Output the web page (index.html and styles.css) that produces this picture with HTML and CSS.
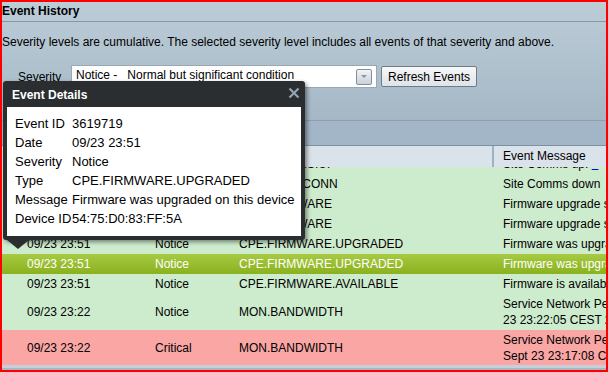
FILE: index.html
```html
<!DOCTYPE html>
<html lang="en">

<head>
    <meta charset="UTF-8">
    <title>Event History</title>
    <link rel="stylesheet" href="styles.css">
</head>

<body>
    <div class="frame">
        <div class="title">Event History</div>
        <div class="intro">Severity levels are cumulative. The selected severity level includes all events of that severity and above.</div>
        <div class="controls">
            <span class="label">Severity</span>
            <div class="select">
                <span class="select-text">Notice -   Normal but significant condition</span>
                <span class="select-btn"><i></i></span>
            </div>
            <button class="refresh">Refresh Events</button>
        </div>
        <div class="band"></div>

        <!-- event table -->
        <div class="table">
            <div class="thead">
                <span>Date</span>
                <span>Severity</span>
                <span class="th-type">Type</span>
                <span class="th-msg">Event Message</span>
            </div>
            <div class="tbody">
                <div class="row cut">
                    <span>09/23 23:52</span><span>Notice</span><span>SITE.COMMS.UP</span><span class="msg">Site Comms up: <a>&nbsp;&nbsp;</a></span>
                </div>
                <div class="row">
                    <span>09/23 23:52</span><span>Notice</span><span>SITE.LOST.CONN</span><span class="msg">Site Comms down</span>
                </div>
                <div class="row">
                    <span>09/23 23:51</span><span>Notice</span><span>CPE.FIRMWARE</span><span class="msg">Firmware upgrade started</span>
                </div>
                <div class="row">
                    <span>09/23 23:51</span><span>Notice</span><span>CPE.FIRMWARE</span><span class="msg">Firmware upgrade started</span>
                </div>
                <div class="row">
                    <span>09/23 23:51</span><span>Notice</span><span>CPE.FIRMWARE.UPGRADED</span><span class="msg">Firmware was upgraded on this device</span>
                </div>
                <div class="row active">
                    <span>09/23 23:51</span><span>Notice</span><span>CPE.FIRMWARE.UPGRADED</span><span class="msg">Firmware was upgraded on this device</span>
                </div>
                <div class="row">
                    <span>09/23 23:51</span><span>Notice</span><span>CPE.FIRMWARE.AVAILABLE</span><span class="msg">Firmware is available for this device</span>
                </div>
                <div class="row tall">
                    <span>09/23 23:22</span><span>Notice</span><span>MON.BANDWIDTH</span><span class="msg">Service Network Performance restored on Sept<br>23 23:22:05 CEST 2013</span>
                </div>
                <div class="row tall critical">
                    <span>09/23 23:22</span><span>Critical</span><span>MON.BANDWIDTH</span><span class="msg">Service Network Performance degraded on<br>Sept 23 23:17:08 CEST 2013</span>
                </div>
            </div>
        </div>

        <!-- popup -->
        <div class="popup">
            <div class="popup-head">
                <span>Event Details</span>
                <svg class="close" viewBox="0 0 12 12" width="12" height="12"><path d="M1.5 1.5 10.5 10.5M10.5 1.5 1.5 10.5" stroke="#93a3b2" stroke-width="2.2" fill="none"/></svg>
            </div>
            <div class="popup-body">
                <div class="field"><span>Event ID</span><span>3619719</span></div>
                <div class="field"><span>Date</span><span>09/23 23:51</span></div>
                <div class="field"><span>Severity</span><span>Notice</span></div>
                <div class="field"><span>Type</span><span>CPE.FIRMWARE.UPGRADED</span></div>
                <div class="field"><span>Message</span><span>Firmware was upgraded on this device</span></div>
                <div class="field"><span>Device ID</span><span>54:75:D0:83:FF:5A</span></div>
            </div>
        </div>
    </div>
</body>

</html>
```

FILE: styles.css
```css
* {
    margin: 0;
    padding: 0;
    box-sizing: border-box;
}

body {
    font-family: "Liberation Sans", Arial, sans-serif;
    font-size: 12px;
    color: #000;
}

.frame {
    position: relative;
    width: 608px;
    height: 372px;
    border: 2px solid #f00;
    background: linear-gradient(to bottom, #bccdd8, #a5b7c5 120px);
    overflow: hidden;
}

.title {
    height: 20px;
    line-height: 19px;
    font-weight: bold;
    border-bottom: 1px solid #8797a5;
}

.intro {
    margin-top: 10px;
    height: 20px;
    line-height: 20px;
}

.controls {
    display: flex;
    align-items: center;
    margin-top: 13px;
    height: 23px;
}

.label {
    width: 69px;
    padding-left: 16px;
    line-height: 23px;
    padding-top: 2px;
}

.select {
    display: flex;
    align-items: center;
    width: 306px;
    height: 23px;
    background: #fff;
    border: 1px solid #9aa8b4;
}

.select-text {
    flex: 1;
    padding-left: 4px;
    white-space: pre;
    line-height: 18px;
    align-self: flex-start;
}

.select-btn {
    display: flex;
    justify-content: center;
    align-items: center;
    width: 16px;
    height: 16px;
    margin-right: 4px;
    border: 1px solid #7f909e;
    border-radius: 2px;
    background: linear-gradient(to bottom, #f2f4f6, #c9d1d8);
}

.select-btn i {
    width: 0;
    height: 0;
    border-left: 3px solid transparent;
    border-right: 3px solid transparent;
    border-top: 3px solid #8a98a5;
}

.refresh {
    margin-left: 4px;
    width: 96px;
    height: 21px;
    font-family: inherit;
    font-size: 12px;
    color: #000;
    border: 1px solid #6f7b86;
    border-radius: 2px;
    background: linear-gradient(to bottom, #f6f7f8, #dfe3e6);
}

.band {
    margin-top: 32px;
    height: 25px;
    border-top: 1px solid #8e9fae;
    background: #a3b6c7;
}

/* table */

.thead {
    display: grid;
    grid-template-columns: 153px 84px 255px 1fr;
    height: 22px;
    line-height: 21px;
    background: #dae2ea;
    border-top: 1px solid #7e91a2;
}

.thead span {
    padding-left: 25px;
}

.thead .th-type {
    padding-left: 0;
    border-right: 2px solid #9db2c5;
}

.thead .th-msg {
    padding-left: 9px;
}

.tbody {
    background: #cdebcd;
    border-bottom: 3px solid #c5d0da;
}

.row {
    display: grid;
    grid-template-columns: 128px 84px 264px 1fr;
    align-items: center;
    height: 20px;
    padding-left: 25px;
    background: #cdebcd;
    white-space: nowrap;
    overflow: hidden;
}

.row span {
    overflow: hidden;
}

.row.cut {
    height: 7px;
    align-items: end;
    line-height: 20px;
}

.row.cut a {
    color: #00f;
    text-decoration: underline;
}

.row.active {
    color: #fff;
    background: linear-gradient(to bottom, #a7ca42, #8ab11e);
}

.row.tall {
    height: 36px;
}

.row.tall .msg {
    line-height: 16px;
}

.row.critical {
    height: 35px;
    background: #f9a6a5;
}

/* popup */

.popup {
    position: absolute;
    left: 1px;
    top: 79px;
    width: 302px;
    padding: 0 4px 4px;
    background: #2a2e30;
    border-radius: 3px;
    box-shadow: 2px 2px 4px rgba(0, 0, 0, 0.45);
}

.popup::after {
    content: "";
    position: absolute;
    left: 4px;
    bottom: -9px;
    border-left: 11px solid transparent;
    border-right: 11px solid transparent;
    border-top: 9px solid #2a2e30;
}

.popup-head {
    display: flex;
    justify-content: space-between;
    align-items: center;
    height: 26px;
    padding-left: 5px;
    padding-top: 2px;
    color: #fff;
    font-weight: bold;
}

.close {
    margin-right: 1px;
    margin-top: -4px;
}

.popup-body {
    background: #fff;
    padding: 7px 0 8px 8px;
    font-size: 13px;
}

.field {
    display: flex;
    height: 19px;
    line-height: 19px;
    white-space: nowrap;
}

.field span:first-child {
    width: 57px;
}
```
